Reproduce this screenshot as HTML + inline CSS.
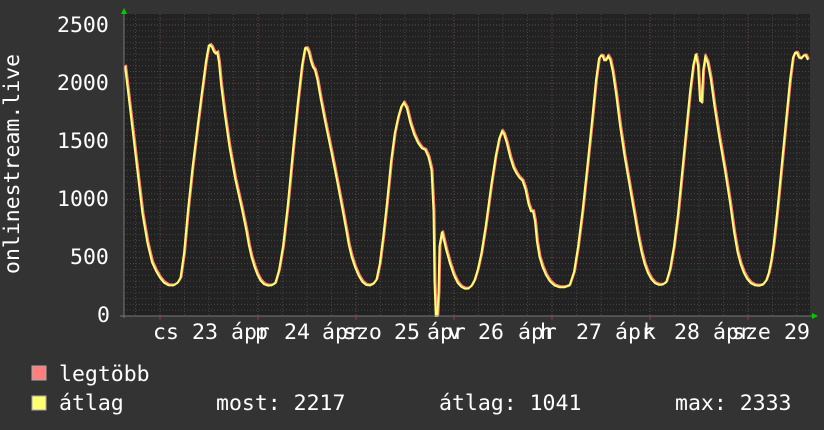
<!DOCTYPE html>
<html><head><meta charset="utf-8"><style>
body{margin:0;width:824px;height:430px;background:#333;overflow:hidden;position:relative;font-family:"DejaVu Sans Mono","Liberation Mono",monospace;color:#fff;}
.t{position:absolute;font-size:21.5px;line-height:1;white-space:pre;}
</style></head><body>
<svg width="824" height="430" style="position:absolute;left:0;top:0">
<rect x="124" y="14" width="686" height="302" fill="#222"/>
<g id="grid"></g>
<path id="p1" fill="none" stroke="#ff7f7f" stroke-width="2"/>
<path id="p2" fill="none" stroke="#ffff70" stroke-width="2"/>
<line x1="124" y1="12" x2="124" y2="318" stroke="#777"/>
<line x1="120" y1="316" x2="812" y2="316" stroke="#777"/>
<polygon points="121,14 127,14 124,8" fill="#0c0"/>
<polygon points="812,313 812,319 818,316" fill="#0c0"/>
<rect x="32" y="366" width="14" height="14" fill="#ff7f7f" stroke="#aaa"/>
<rect x="32" y="396" width="14" height="14" fill="#ffff70" stroke="#aaa"/>
</svg>
<div class="t" style="left:57px;top:15px">2500</div>
<div class="t" style="left:57px;top:73px">2000</div>
<div class="t" style="left:57px;top:131px">1500</div>
<div class="t" style="left:57px;top:189px">1000</div>
<div class="t" style="left:70px;top:247px">500</div>
<div class="t" style="left:97px;top:305px">0</div>
<div class="t" style="left:2px;top:274px;transform-origin:0 0;transform:rotate(-90deg)">onlinestream.live</div>
<div class="t" style="left:153px;top:322px">cs</div>
<div class="t" style="left:192px;top:322px">23</div>
<div class="t" style="left:231px;top:322px">ápr</div>
<div class="t" style="left:255px;top:322px">p</div>
<div class="t" style="left:284px;top:322px">24</div>
<div class="t" style="left:322px;top:322px">ápr</div>
<div class="t" style="left:343px;top:322px">szo</div>
<div class="t" style="left:394px;top:322px">25</div>
<div class="t" style="left:427px;top:322px">ápr</div>
<div class="t" style="left:448px;top:322px">v</div>
<div class="t" style="left:478px;top:322px">26</div>
<div class="t" style="left:518px;top:322px">ápr</div>
<div class="t" style="left:540px;top:322px">h</div>
<div class="t" style="left:576px;top:322px">27</div>
<div class="t" style="left:615px;top:322px">ápr</div>
<div class="t" style="left:643px;top:322px">k</div>
<div class="t" style="left:674px;top:322px">28</div>
<div class="t" style="left:713px;top:322px">ápr</div>
<div class="t" style="left:732px;top:322px">sze</div>
<div class="t" style="left:784px;top:322px">29</div>
<div class="t" style="left:59px;top:364px">legtöbb</div>
<div class="t" style="left:59px;top:393px">átlag</div>
<div class="t" style="left:216px;top:393px">most: 2217</div>
<div class="t" style="left:439px;top:393px">átlag: 1041</div>
<div class="t" style="left:675px;top:393px">max: 2333</div>
<script>
var ns="http://www.w3.org/2000/svg",g=document.getElementById("grid");
function L(x1,y1,x2,y2,c){var l=document.createElementNS(ns,"line");l.setAttribute("x1",x1);l.setAttribute("y1",y1);l.setAttribute("x2",x2);l.setAttribute("y2",y2);l.setAttribute("stroke",c);l.setAttribute("stroke-dasharray","1,2");g.appendChild(l);}
for(var v=50;v<=2550;v+=50){var y=316-v*0.1164;if(y<14)break;L(124,y,810,y,v%500==0?"#6a4a4a":"#444");}
for(var x=160-98;x<810;x+=24.5){if(x>124)L(x,14,x,316,(Math.abs((x-160)/98-Math.round((x-160)/98))<0.01)?"#6a4a4a":"#444");}
for(var x=160;x<810;x+=98){var l=document.createElementNS(ns,"line");l.setAttribute("x1",x);l.setAttribute("y1",316);l.setAttribute("x2",x);l.setAttribute("y2",320);l.setAttribute("stroke","#a33");g.appendChild(l);}
var d=[125,2150,140,1000,150,500,158,350,166,265,176,262,182,350,190,1100,200,1800,208,2320,211,2330,215,2250,218,2270,222,1900,232,1300,245,800,250,550,256,380,262,280,270,255,277,290,285,700,296,1700,304,2300,308,2300,312,2150,316,2100,322,1800,334,1300,345,800,350,550,357,370,364,270,372,260,378,330,385,800,393,1500,400,1780,405,1850,412,1600,420,1450,427,1420,433,1200,435,0,438,0,440,800,448,500,456,300,463,235,470,235,476,330,483,600,494,1300,501,1600,505,1550,512,1300,518,1200,524,1150,530,900,534,900,538,550,544,380,552,270,562,240,572,270,580,700,590,1500,598,2200,602,2250,605,2180,609,2250,614,2050,622,1500,632,1000,640,600,646,400,653,290,661,260,668,300,676,700,684,1400,692,2100,697,2300,701,1700,704,2250,709,2150,716,1700,728,1100,736,600,742,400,749,290,757,255,765,275,770,400,775,700,784,1500,792,2200,796,2280,800,2200,805,2250,808,2200];
function P(o){var pts=[];for(var i=0;i<d.length;i+=2)pts.push([d[i]+o,316-d[i+1]*0.1164-o]);
var s="M"+pts[0][0]+","+pts[0][1];for(var i=1;i<pts.length-1;i++){var a=pts[i],b=pts[i+1];var q=[(a[0]*3+b[0])/4,(a[1]*3+b[1])/4],r=[(a[0]+b[0]*3)/4,(a[1]+b[1]*3)/4];s+=" L"+q[0]+","+q[1]+" L"+r[0]+","+r[1];}
var e=pts[pts.length-1];s+=" L"+e[0]+","+e[1];return s;}
document.getElementById("p1").setAttribute("d",P(1));document.getElementById("p2").setAttribute("d",P(0));
</script>
</body></html>
